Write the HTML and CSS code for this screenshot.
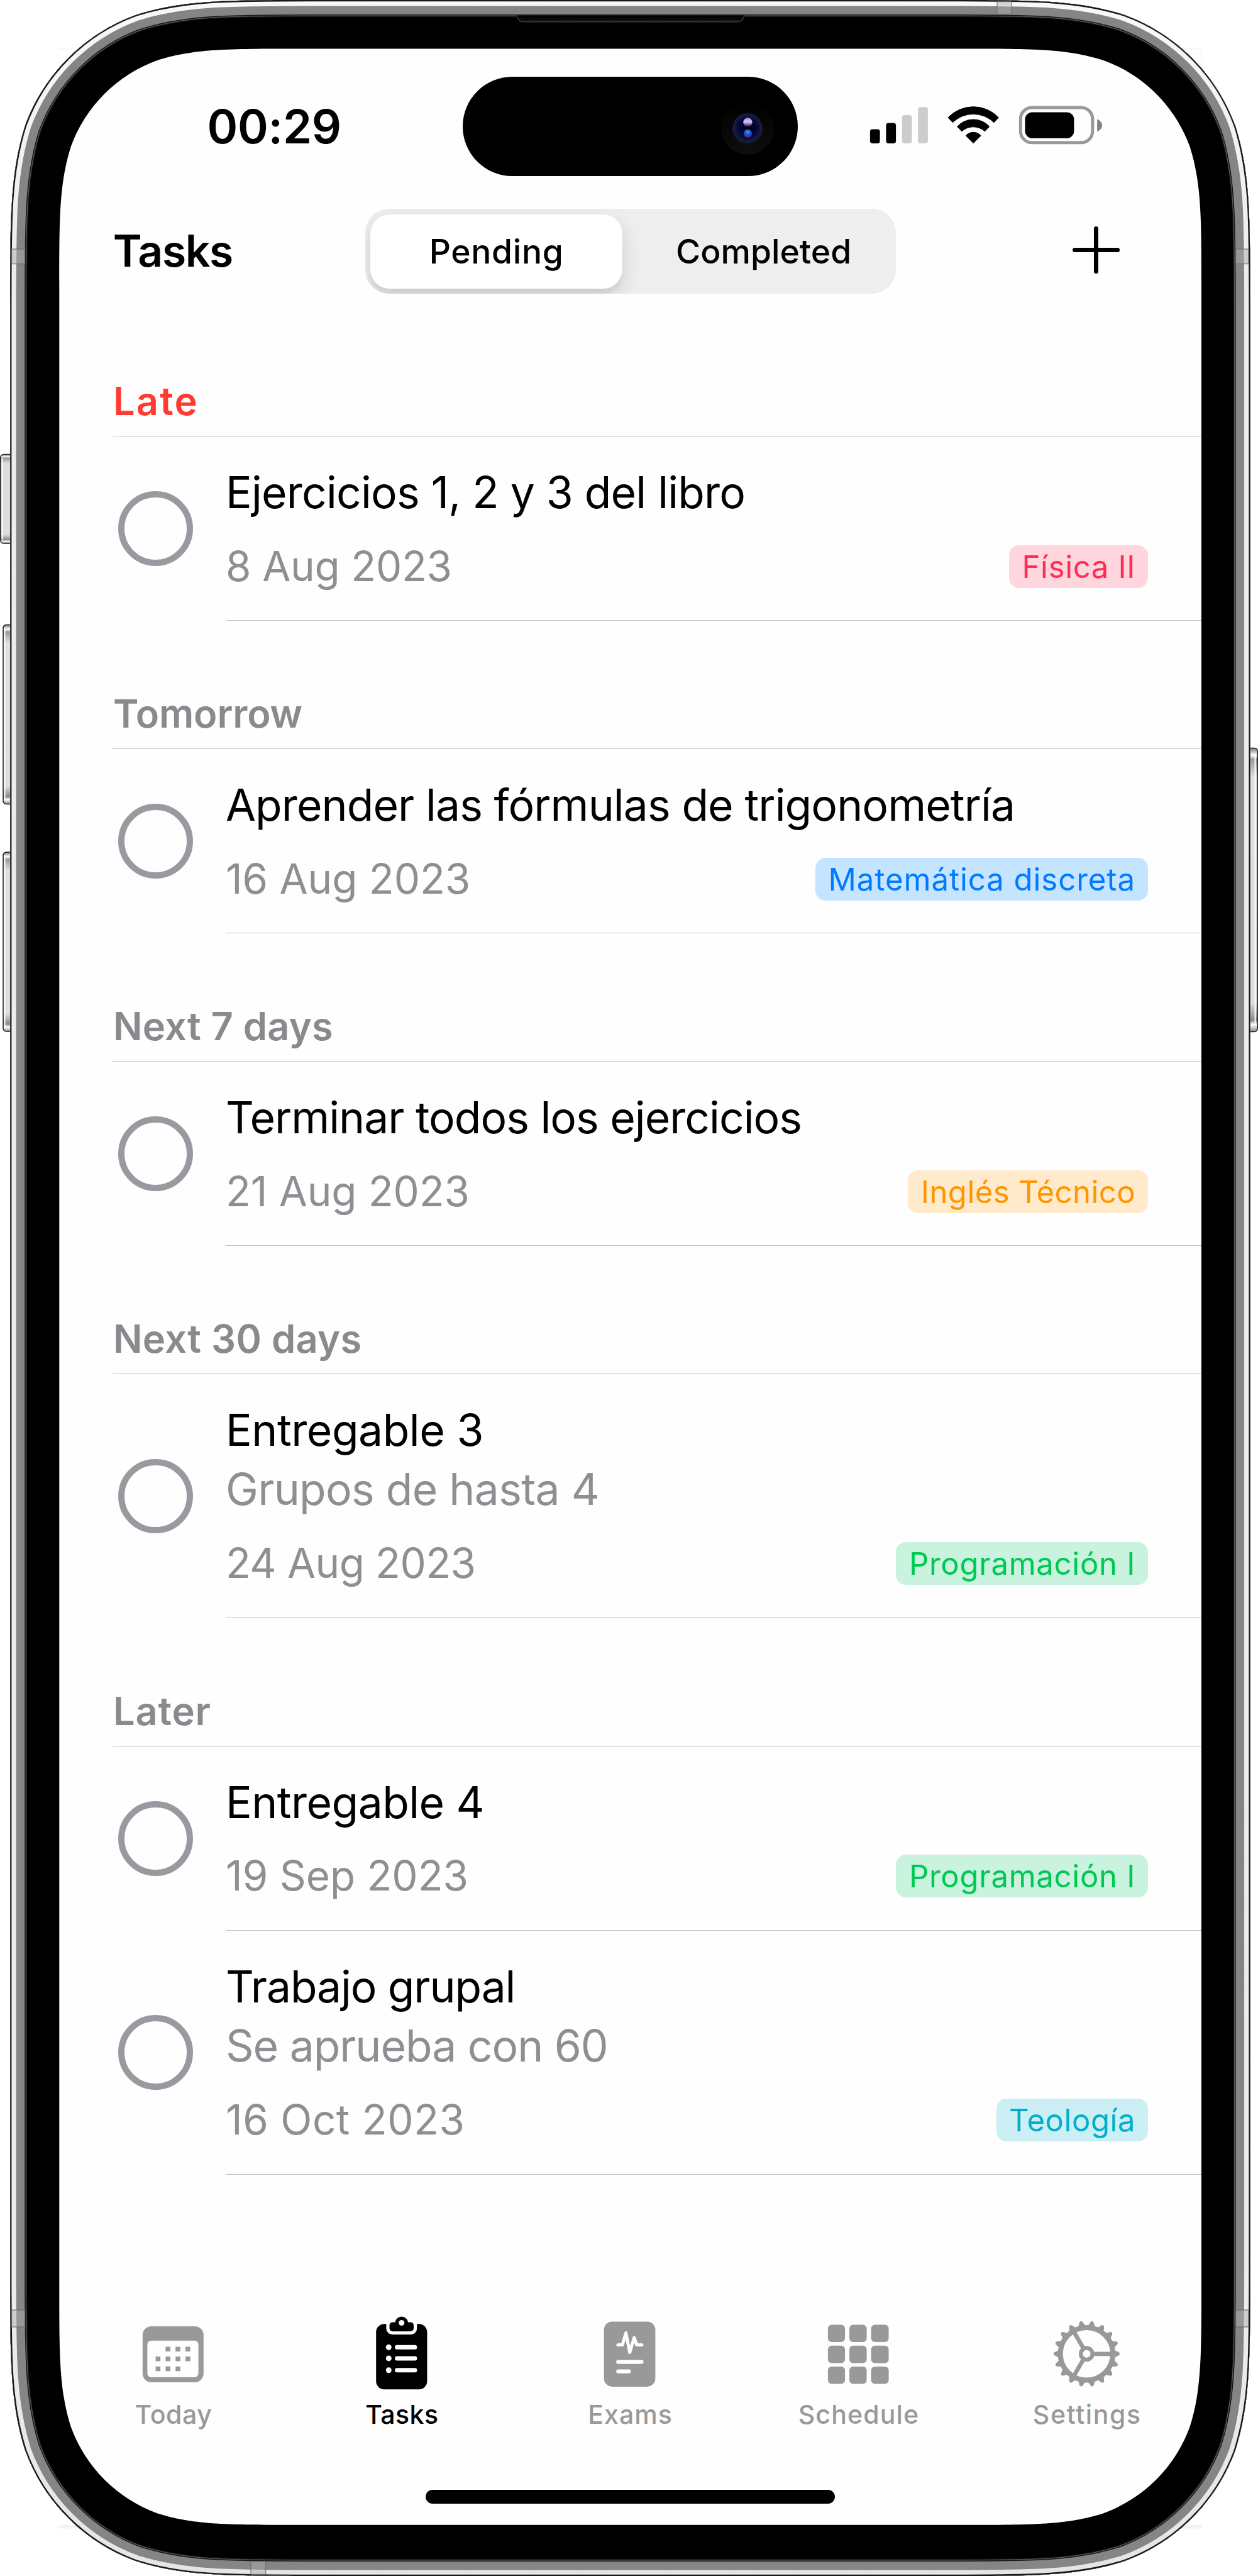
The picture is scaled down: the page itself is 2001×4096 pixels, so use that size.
FILE: index.html
```html
<!DOCTYPE html>
<html lang="en">
<head>
<meta charset="utf-8">
<title>Tasks</title>
<link rel="stylesheet" href="styles.css">
</head>
<body>
<div class="phone">
  <svg class="frame" viewBox="0 0 2001 4096" aria-hidden="true">
    <defs>
      <linearGradient id="rim" x1="0" y1="0" x2="0" y2="1">
        <stop offset="0" stop-color="#f8f8f8"/><stop offset=".1" stop-color="#eeeded"/><stop offset=".9" stop-color="#ececec"/><stop offset="1" stop-color="#e5e5e5"/>
      </linearGradient>
      <linearGradient id="key" x1="0" y1="0" x2="0" y2="1">
        <stop offset="0" stop-color="#777"/><stop offset=".025" stop-color="#fff"/><stop offset=".04" stop-color="#999"/><stop offset=".1" stop-color="#dededd"/>
        <stop offset=".9" stop-color="#dcdddc"/><stop offset=".96" stop-color="#888"/><stop offset=".975" stop-color="#fff"/><stop offset="1" stop-color="#888"/>
      </linearGradient>
      <linearGradient id="ear" x1="0" y1="0" x2="0" y2="1">
        <stop offset="0" stop-color="#000"/><stop offset="1" stop-color="#141414"/>
      </linearGradient>
      <path id="body" d="M500.5 0H1504.3c139.5 0 209.2 0 284.2 23.7c82 29.9 146.5 94.4 176.4 176.4c23.7 75 23.7 144.7 23.7 284.2V3611.7c0 139.5 0 209.2-23.7 284.2c-29.9 82-94.4 146.5-176.4 176.4c-75 23.7-144.7 23.7-284.2 23.7H500.5c-139.5 0-209.2 0-284.2-23.7c-82-29.9-146.5-94.4-176.4-176.4c-23.7-75-23.7-144.7-23.7-284.2V484.3c0-139.5 0-209.2 23.7-284.2c29.9-82 94.4-146.5 176.4-176.4c75-23.7 144.7-23.7 284.2-23.7z"/>
      <clipPath id="bodyClip"><use href="#body"/></clipPath>
    </defs>
    <path d="M1680 77.8H1910.8V300" fill="none" stroke="#efefef"/>
    <path d="M94.3 77.8H160" stroke="#efefef"/>
    <path d="M94.3 4014.7H1911V4020.500H94.3z" fill="#f4f1f8"/>
    <g fill="url(#key)" stroke="#1d1d1d" stroke-width="1.5">
      <rect x="0.800" y="722.500" width="30" height="141.500" rx="5"/>
      <rect x="5" y="993.400" width="30" height="285" rx="5"/>
      <rect x="5" y="1355" width="30" height="285" rx="5"/>
      <rect x="1970" y="1189.400" width="30.200" height="451" rx="5"/>
    </g>
    <g stroke="#fff" stroke-width="2"><path d="M3.500 728V858M7.500 1000V1272M7.500 1362V1633M1996.500 1200V1630"/></g>
    <use href="#body" fill="#000"/>
    <g clip-path="url(#bodyClip)" fill="none">
      <use href="#body" stroke="#111" stroke-width="54"/>
      <use href="#body" stroke="#5b5b5b" stroke-width="51.500"/>
      <use href="#body" stroke="#161616" stroke-width="49"/>
      <use href="#body" stroke="#858585" stroke-width="46"/>
      <use href="#body" stroke="url(#rim)" stroke-width="19"/>
      <use href="#body" stroke="#181818" stroke-width="4.400"/>
      <g fill="#fff" fill-opacity=".16" stroke="#6a6a72" stroke-opacity=".75" stroke-width="1.5">
        <path d="M18.500 396H39.500V419.500H18.500zM18.500 3673H39.500V3700H18.500zM1965.500 396H1986V419.500H1965.500zM1965.500 3673H1986V3700H1965.500zM1586 2.500H1609V22.500H1586zM399 4073H422.500V4093.500H399z"/>
      </g>
      <path fill="#7d7d80" fill-opacity=".3" d="M18.500 396H25.500V419.500H18.500zM18.500 3673H25.500V3700H18.500zM1979 396H1986V419.500H1979zM1979 3673H1986V3700H1979zM1586 2.500H1609V9.500H1586zM399 4086.500H422.500V4093.500H399z"/>
    </g>
    <path d="M821 24.500c4 4 2.500 10 11 10.300H1173c9 0 8-6 12-10.300" fill="url(#ear)" stroke="#3d3d3d" stroke-width="1.500"/>
    <path fill="#fefefe" d="M471 77.400H1534.300c108.500 0 162.700 0 221.100 18.500c63.700 23.200 113.900 73.400 137.100 137.100c18.500 58.400 18.500 112.600 18.500 221.100V3638c0 108.500 0 162.700-18.500 221.100c-23.200 63.700-73.400 113.900-137.100 137.100c-58.400 18.500-112.600 18.500-221.100 18.500H471c-108.500 0-162.700 0-221.100-18.500c-63.700-23.200-113.900-73.400-137.100-137.100c-18.500-58.400-18.500-112.600-18.500-221.100V454.100c0-108.500 0-162.700 18.500-221.100c23.200-63.700 73.400-113.900 137.100-137.100c58.400-18.500 112.600-18.500 221.100-18.500z"/>
  </svg>

  <div class="screen">
    <div class="status">
      <div class="clock">00:29</div>
      <div class="island">
        <svg class="camera" viewBox="-42 -42 84 84" aria-hidden="true">
          <defs>
            <linearGradient id="ring" x1="0" y1="0" x2="0" y2="1"><stop offset="0" stop-color="#000"/><stop offset="1" stop-color="#0e0e0e"/></linearGradient>
            <radialGradient id="lens"><stop offset="0" stop-color="#020008"/><stop offset=".45" stop-color="#04003c"/><stop offset=".75" stop-color="#0a1034"/><stop offset="1" stop-color="#16224a"/></radialGradient>
            <linearGradient id="glint" x1="0" y1="0" x2="0" y2="1"><stop offset="0" stop-color="#a58be0"/><stop offset=".45" stop-color="#d3c8ee"/><stop offset="1" stop-color="#1c0840"/></linearGradient>
            <radialGradient id="spot" cx=".5" cy=".35" r=".65"><stop offset="0" stop-color="#12c4c0"/><stop offset=".45" stop-color="#1858c8"/><stop offset="1" stop-color="#6a12a8"/></radialGradient>
          </defs>
          <circle r="42" fill="url(#ring)"/>
          <circle cy="2" r="25" fill="#101010"/>
          <circle cy="-.5" r="23.200" fill="url(#lens)"/>
          <circle cx=".4" cy="-9.500" r="7.200" fill="url(#glint)"/>
          <circle cx=".4" cy="8.200" r="6.600" fill="url(#spot)"/>
        </svg>
      </div>
      <svg class="indicators" viewBox="1380 165 376 72" aria-hidden="true">
        <rect x="1383.900" y="205.400" width="15.700" height="22.600" rx="4"/>
        <rect x="1409.400" y="195.500" width="15.700" height="32.500" rx="4"/>
        <g fill="#ccc"><rect x="1434.800" y="182.900" width="15.700" height="45.100" rx="4"/><rect x="1460.200" y="170.300" width="15.700" height="57.700" rx="4"/></g>
        <g stroke="#000" stroke-width="1" stroke-linejoin="round">
          <path d="M1508 187A55.400 55.400 0 0 1 1588.400 187L1581 194.800A46.800 46.800 0 0 0 1515.400 194.800z"/>
          <path d="M1522.600 201.300A34.400 34.400 0 0 1 1573.800 201.300L1566.500 208.800A27.300 27.300 0 0 0 1529.900 208.800z"/>
          <path d="M1536.200 215.700A16 16 0 0 1 1560.200 215.700L1548.200 227.600z"/>
        </g>
        <rect x="1623.300" y="171.100" width="114.500" height="55.700" rx="18" fill="none" stroke="#999" stroke-width="5"/>
        <rect x="1630.500" y="178.500" width="77.900" height="41.300" rx="11.500"/>
        <path d="M1745.200 189.400C1750 191.500 1753 195 1753 199.300S1750 207.100 1745.200 209.200z" fill="#808080"/>
      </svg>
    </div>

    <header class="nav">
      <h1 class="nav-title">Tasks</h1>
      <div class="segmented">
        <div class="segment segment-on">Pending</div>
        <div class="segment">Completed</div>
      </div>
      <svg class="plus" viewBox="0 0 75 75" aria-hidden="true"><path d="M37.500 3.500V71.500M3.500 37.500H71.500"/></svg>
    </header>

    <main class="list">
      <section>
        <h2 class="group late">Late</h2>
        <article class="task exercises"><i class="check"></i><div class="info">
          <div class="title">Ejercicios 1, 2 y 3 del libro</div>
          <div class="meta"><span class="date">8 Aug 2023</span><span class="tag pink">Física II</span></div>
        </div></article>
      </section>
      <section>
        <h2 class="group tomorrow">Tomorrow</h2>
        <article class="task formulas"><i class="check"></i><div class="info">
          <div class="title">Aprender las fórmulas de trigonometría</div>
          <div class="meta"><span class="date">16 Aug 2023</span><span class="tag blue">Matemática discreta</span></div>
        </div></article>
      </section>
      <section>
        <h2 class="group week">Next 7 days</h2>
        <article class="task finish"><i class="check"></i><div class="info">
          <div class="title">Terminar todos los ejercicios</div>
          <div class="meta"><span class="date">21 Aug 2023</span><span class="tag orange">Inglés Técnico</span></div>
        </div></article>
      </section>
      <section>
        <h2 class="group month">Next 30 days</h2>
        <article class="task noted delivery-3"><i class="check"></i><div class="info">
          <div class="title">Entregable 3</div>
          <div class="note">Grupos de hasta 4</div>
          <div class="meta"><span class="date">24 Aug 2023</span><span class="tag green">Programación I</span></div>
        </div></article>
      </section>
      <section>
        <h2 class="group later">Later</h2>
        <article class="task delivery-4"><i class="check"></i><div class="info">
          <div class="title">Entregable 4</div>
          <div class="meta"><span class="date">19 Sep 2023</span><span class="tag green">Programación I</span></div>
        </div></article>
        <article class="task noted teamwork"><i class="check"></i><div class="info">
          <div class="title">Trabajo grupal</div>
          <div class="note">Se aprueba con 60</div>
          <div class="meta"><span class="date">16 Oct 2023</span><span class="tag teal">Teología</span></div>
        </div></article>
      </section>
    </main>

    <nav class="tabs">
      <div class="tab tab-today">
        <svg class="tab-icon" viewBox="216 3680 120 120" aria-hidden="true">
          <path fill-rule="evenodd" d="M240.800 3698.900H309.800a14 14 0 0 1 14 14V3774a14 14 0 0 1-14 14H240.800a14 14 0 0 1-14-14V3712.900a14 14 0 0 1 14-14zM240.400 3721.700a6 6 0 0 0-6 6V3773.900a6 6 0 0 0 6 6H309.600a6 6 0 0 0 6-6V3727.700a6 6 0 0 0-6-6z"/>
          <path d="M263.400 3731.400h7.600v7.600h-7.600zM279.200 3731.400h7.600v7.600h-7.600zM295 3731.400h7.600v7.600h-7.600zM247.600 3747h7.600v7.600h-7.600zM263.400 3747h7.600v7.600h-7.600zM279.200 3747h7.600v7.600h-7.600zM295 3747h7.600v7.600h-7.600zM247.600 3762.700h7.600v7.600h-7.600zM263.400 3762.700h7.600v7.600h-7.600zM279.200 3762.700h7.600v7.600h-7.600z"/>
        </svg>
        <span class="tab-label">Today</span>
      </div>
      <div class="tab tab-on">
        <svg class="tab-icon" viewBox="579.300 3680 120 120" aria-hidden="true">
          <path d="M611.500 3695.200H614.700V3702.500a9.600 9.600 0 0 0 9.600 9.600H653.900a9.600 9.600 0 0 0 9.600-9.600V3695.200H666.700a13 13 0 0 1 13 13V3786.200a13 13 0 0 1-13 13H611.500a13 13 0 0 1-13-13V3708.200a13 13 0 0 1 13-13z"/>
          <path fill-rule="evenodd" d="M624.800 3692.400H628.900A10.300 10.300 0 0 1 649.300 3692.400H653.300a5 5 0 0 1 5 5V3702a5 5 0 0 1-5 5H624.800a5 5 0 0 1-5-5V3697.400a5 5 0 0 1 5-5zM639.100 3688.900a4.500 4.500 0 1 0 .01 0z"/>
          <g fill="#fefefe">
            <circle cx="618.600" cy="3732.300" r="4.500"/><circle cx="618.600" cy="3749.900" r="4.500"/><circle cx="618.600" cy="3768.700" r="4.500"/>
            <rect x="628.300" y="3728.800" width="35.400" height="7" rx="3.500"/><rect x="628.300" y="3746.400" width="35.400" height="7" rx="3.500"/><rect x="628.300" y="3765.200" width="35.400" height="7" rx="3.500"/>
          </g>
        </svg>
        <span class="tab-label">Tasks</span>
      </div>
      <div class="tab tab-exams">
        <svg class="tab-icon" viewBox="942.600 3680 120 120" aria-hidden="true">
          <rect x="960.300" y="3691.400" width="81.700" height="103.500" rx="13"/>
          <path d="M982.500 3728.600H989.500L995.200 3709.500L1001.300 3740.500L1008.300 3717L1012.500 3728.600H1020.500" fill="none" stroke="#fefefe" stroke-width="5" stroke-linecap="round" stroke-linejoin="round"/>
          <path d="M982.900 3755.600H1020.100M982.900 3770.600H1000" stroke="#fefefe" stroke-width="6.300" stroke-linecap="round"/>
        </svg>
        <span class="tab-label">Exams</span>
      </div>
      <div class="tab tab-schedule">
        <svg class="tab-icon" viewBox="1306 3680 120 120" aria-hidden="true">
          <g id="cells"><rect x="1316.900" y="3696.400" width="27.200" height="27.600" rx="6"/><rect x="1351" y="3696.400" width="27.600" height="27.600" rx="6"/><rect x="1385.600" y="3696.400" width="28" height="27.600" rx="6"/></g>
          <use href="#cells" y="33.400"/><use href="#cells" y="66.600"/>
        </svg>
        <span class="tab-label">Schedule</span>
      </div>
      <div class="tab tab-settings">
        <svg class="tab-icon" viewBox="-84.400 -89.200 170.500 170.500" aria-hidden="true">
          <defs>
            <path id="tooth" d="M-8.500-62L-3.800-72.200Q0-77.500 3.800-72.200L8.500-62z"/>
            <g id="teeth"><use href="#tooth" transform="rotate(10)"/><use href="#tooth" transform="rotate(30)"/><use href="#tooth" transform="rotate(50)"/></g>
          </defs>
          <circle r="59.300" fill="none" stroke="#999" stroke-width="11.400"/>
          <circle r="13.200" fill="none" stroke="#999" stroke-width="9"/>
          <path d="M15 0H56M-7.500-13L-28-48.500M-7.500 13L-28 48.500" stroke="#999" stroke-width="9.600"/>
          <use href="#teeth"/><use href="#teeth" transform="rotate(60)"/><use href="#teeth" transform="rotate(120)"/><use href="#teeth" transform="rotate(180)"/><use href="#teeth" transform="rotate(240)"/><use href="#teeth" transform="rotate(300)"/>
        </svg>
        <span class="tab-label">Settings</span>
      </div>
    </nav>
    <div class="home"></div>
  </div>
</div>
</body>
</html>
```
FILE: styles.css
```css
* { box-sizing: border-box; }

body {
  margin: 0;
  background: #fff;
  font-family: Inter, "Liberation Sans", sans-serif;
  font-optical-sizing: none;
  color: #000;
}

.phone {
  position: relative;
  width: 2001px;
  height: 4096px;
  padding: 77.4px 90px 81.3px 94.3px;
  overflow: hidden;
}

.frame {
  position: absolute;
  inset: 0;
  width: 2001px;
  height: 4096px;
}

.screen {
  position: relative;
  display: flex;
  flex-direction: column;
  height: 100%;
  padding: 45.1px 0 33.8px;
}

.status {
  display: flex;
  align-items: center;
  height: 157.7px;
}

.clock {
  width: 642.1px;
  padding-left: 235.2px;
  font-size: 74px;
  font-weight: 600;
  letter-spacing: -.0035em;
}

.island {
  display: flex;
  align-items: center;
  justify-content: flex-end;
  width: 532.4px;
  height: 157.7px;
  padding-right: 38px;
  border-radius: 79px;
  background: #000;
}

.camera {
  width: 84px;
  height: 84px;
  margin-top: 5px;
}

.indicators {
  width: 376px;
  height: 72px;
  margin-left: 111.2px;
}

.nav {
  display: flex;
  align-items: center;
  height: 134.8px;
  margin-top: 52.2px;
}

.nav-title {
  width: 486.4px;
  margin: -2px 0 0;
  padding-left: 85.5px;
  font-size: 69.6px;
  font-weight: 600;
  letter-spacing: -.0196em;
}

.segmented {
  display: flex;
  width: 844.4px;
  height: 134.8px;
  padding: 8.2px;
  border-radius: 38px;
  background: #eee;
  overflow: hidden;
}

.segment {
  display: flex;
  align-items: center;
  justify-content: center;
  flex: 1;
  padding-left: 26px;
  padding-right: 4px;
  font-size: 53.4px;
  font-weight: 500;
  letter-spacing: .0013em;
}

.segment-on {
  flex: none;
  width: 401.4px;
  padding: 0;
  border-radius: 31px;
  background: #fff;
  box-shadow: 0 12px 32px rgba(0, 0, 0, .13), 0 10px 6px rgba(0, 0, 0, .04);
  letter-spacing: .0126em;
}

.plus {
  width: 75px;
  height: 75px;
  margin: -5px 0 0 281.2px;
  fill: none;
  stroke: #000;
  stroke-width: 7px;
  stroke-linecap: round;
}

.list { padding-top: 22.9px; }

.group {
  display: flex;
  align-items: flex-end;
  height: 204px;
  margin: 0 0 0 84.5px;
  padding: 0 0 17.8px 1.2px;
  border-bottom: 1.4px solid #c2c2c4;
  font-size: 61.4px;
  font-weight: 600;
  line-height: 1.21;
  color: #8a8a8e;
}

.late { color: #ff3b30; letter-spacing: .0345em; }
.tomorrow { letter-spacing: -.0014em; }
.week { letter-spacing: .003em; }
.month { letter-spacing: .0045em; }
.later { letter-spacing: .0133em; }

.task {
  display: flex;
  align-items: center;
  height: 293px;
  padding-left: 94px;
}

.noted { height: 387.8px; }

.check {
  width: 118.8px;
  height: 118.8px;
  border: 10px solid #9a999f;
  border-radius: 50%;
}

.info {
  display: flex;
  flex: 1;
  flex-direction: column;
  height: 100%;
  margin-left: 51.9px;
  padding: 42.8px 84.9px 51.4px 0;
  border-bottom: 1.4px solid #c2c2c4;
}

.title,
.note {
  font-size: 69.6px;
  line-height: 93px;
  white-space: nowrap;
}

.note { line-height: 95px; color: #8e8e93; }

.meta {
  display: flex;
  align-items: flex-start;
  justify-content: space-between;
  height: 68px;
  margin-top: auto;
}

.date {
  font-size: 65.5px;
  line-height: 67px;
  color: #8e8e93;
}

.exercises .title { letter-spacing: -.0115em; }
.exercises .date { letter-spacing: -.0054em; }
.formulas .title { letter-spacing: -.0132em; }
.formulas .date { letter-spacing: -.0009em; }
.finish .title { letter-spacing: -.0145em; }
.finish .date { letter-spacing: -.0017em; }
.delivery-3 .title { letter-spacing: -.0069em; }
.delivery-3 .note { letter-spacing: -.0105em; }
.delivery-3 .date { letter-spacing: -.0088em; }
.delivery-4 .title { letter-spacing: -.008em; }
.teamwork .title { letter-spacing: -.0161em; }
.teamwork .note { letter-spacing: -.0151em; }
.teamwork .date { letter-spacing: .0082em; }

.tag {
  height: 68px;
  padding: 0 20px 0 20.5px;
  border-radius: 16px;
  font-size: 49.1px;
  line-height: 68px;
  white-space: nowrap;
}

.pink { background: #ffd5de; color: #ff2d55; letter-spacing: .0128em; }
.blue { background: #c4e4ff; color: #007aff; letter-spacing: .0192em; }
.orange { background: #ffeacc; color: #ff9500; letter-spacing: .0085em; }
.green { background: #c9f3df; color: #00c853; letter-spacing: .014em; }
.teal { background: #cceef5; color: #00b0ca; letter-spacing: .0109em; }

.tabs {
  display: flex;
  margin-top: auto;
}

.tab {
  display: flex;
  flex: 1;
  flex-direction: column;
  align-items: center;
  color: #999;
  fill: #999;
}

.tab-on { color: #000; fill: #000; letter-spacing: .0107em; }
.tab-today { letter-spacing: .0152em; }
.tab-exams { letter-spacing: .0259em; }
.tab-schedule { letter-spacing: .0284em; }
.tab-settings { letter-spacing: .0403em; }

.tab-icon {
  width: 120px;
  height: 120px;
}

.tab-label {
  margin-top: 14.4px;
  font-size: 41px;
  font-weight: 500;
  line-height: 50px;
}

/* The tracking is set in em of the label, not of the tab */
.tab-on .tab-label { letter-spacing: .0107em; }
.tab-today .tab-label { letter-spacing: .0152em; }
.tab-exams .tab-label { letter-spacing: .0259em; }
.tab-schedule .tab-label { letter-spacing: .0284em; }
.tab-settings .tab-label { letter-spacing: .0403em; }

.home {
  align-self: center;
  width: 650.4px;
  height: 21.6px;
  margin-top: 94.9px;
  border-radius: 11px;
  background: #000;
}
```
